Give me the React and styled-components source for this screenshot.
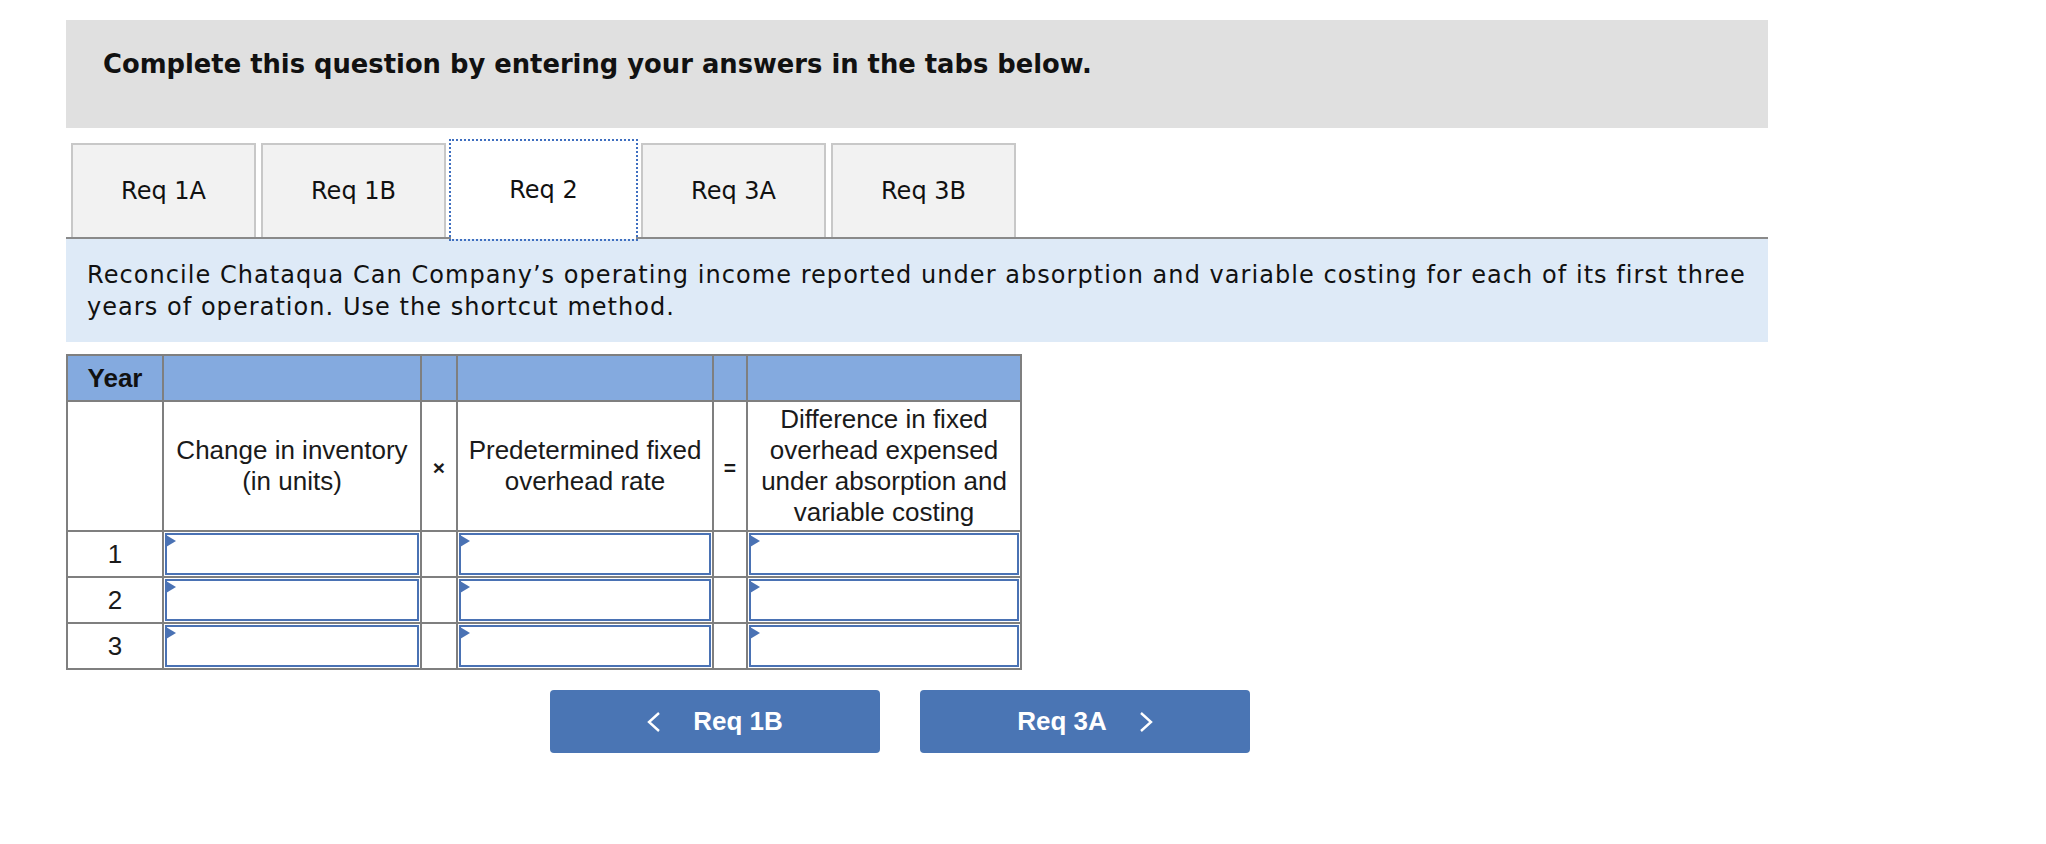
import React from "react";
import styled, { createGlobalStyle } from "styled-components";

const GlobalStyle = createGlobalStyle`
  body {
    margin: 0;
    background: #fff;
    font-family: "DejaVu Sans", Verdana, sans-serif;
    color: #111;
  }
`;

const tabs = ["Req 1A", "Req 1B", "Req 2", "Req 3A", "Req 3B"];
const years = [1, 2, 3];

export default function App() {
  return (
    <>
      <GlobalStyle />
      <Page>
        <Header>
          <HeaderText>Complete this question by entering your answers in the tabs below.</HeaderText>
        </Header>

        <TabBar>
          {tabs.map((t) => (
            <Tab key={t} $active={t === "Req 2"}>
              {t}
            </Tab>
          ))}
        </TabBar>

        <Prompt>
          Reconcile Chataqua Can Company’s operating income reported under absorption and variable costing for
          each of its first three years of operation. Use the shortcut method.
        </Prompt>

        <Table>
          <colgroup>
            <col style={{ width: 96 }} />
            <col style={{ width: 258 }} />
            <col style={{ width: 36 }} />
            <col style={{ width: 256 }} />
            <col style={{ width: 34 }} />
            <col style={{ width: 274 }} />
          </colgroup>
          <thead>
            <HeadRow>
              <HeadCell>Year</HeadCell>
              <HeadCell />
              <HeadCell />
              <HeadCell />
              <HeadCell />
              <HeadCell />
            </HeadRow>
          </thead>
          <tbody>
            <LabelRow>
              <Cell />
              <Cell>
                Change in inventory
                <br />
                (in units)
              </Cell>
              <Cell>
                <Sign>×</Sign>
              </Cell>
              <Cell>
                Predetermined fixed
                <br />
                overhead rate
              </Cell>
              <Cell>
                <Sign>=</Sign>
              </Cell>
              <Cell>
                Difference in fixed
                <br />
                overhead expensed
                <br />
                under absorption and
                <br />
                variable costing
              </Cell>
            </LabelRow>
            {years.map((y) => (
              <EntryRow key={y}>
                <Cell>{y}</Cell>
                <InputCell>
                  <Field>
                    <Input type="text" />
                  </Field>
                </InputCell>
                <Cell />
                <InputCell>
                  <Field>
                    <Input type="text" />
                  </Field>
                </InputCell>
                <Cell />
                <InputCell>
                  <Field>
                    <Input type="text" />
                  </Field>
                </InputCell>
              </EntryRow>
            ))}
          </tbody>
        </Table>

        <NavRow>
          <NavButton>
            <Chevron viewBox="0 0 14 20">
              <polyline points="12,1 2,10 12,19" />
            </Chevron>
            Req 1B
          </NavButton>
          <NavButton>
            Req 3A
            <Chevron viewBox="0 0 14 20">
              <polyline points="2,1 12,10 2,19" />
            </Chevron>
          </NavButton>
        </NavRow>
      </Page>
    </>
  );
}

const Page = styled.div`
  width: 1702px;
  padding: 20px 0 40px 66px;
`;

const Header = styled.div`
  height: 108px;
  box-sizing: border-box;
  background: #e0e0e0;
  padding: 29px 37px 0;
`;

const HeaderText = styled.h1`
  margin: 0;
  font-family: "DejaVu Sans", Verdana, sans-serif;
  font-weight: bold;
  font-size: 25.8px;
  color: #111;
`;

const TabBar = styled.div`
  display: flex;
  align-items: flex-end;
  gap: 5px;
  margin-top: 13px;
  padding-left: 5px;
  position: relative;
  z-index: 1;
`;

const Tab = styled.button`
  width: 185px;
  height: ${(p) => (p.$active ? "98px" : "94px")};
  margin-bottom: ${(p) => (p.$active ? "-2px" : "0")};
  box-sizing: border-box;
  display: flex;
  align-items: center;
  justify-content: center;
  padding: 0;
  background: ${(p) => (p.$active ? "#fff" : "#f2f2f2")};
  border: ${(p) => (p.$active ? "none" : "2px solid #c8c8c8")};
  border-bottom: none;
  outline: ${(p) => (p.$active ? "2px dotted #3f6fc0" : "none")};
  font-family: "DejaVu Sans", Verdana, sans-serif;
  font-size: 24px;
  color: #111;
  cursor: pointer;
`;

const Prompt = styled.p`
  margin: 0;
  background: #deeaf7;
  border-top: 2px solid #8a8a8a;
  padding: 20px 8px 19px 21px;
  font-family: "DejaVu Sans", Verdana, sans-serif;
  font-size: 24px;
  line-height: 32px;
  letter-spacing: 1.05px;
  color: #111;
`;

const Table = styled.table`
  margin-top: 12px;
  width: 955px;
  table-layout: fixed;
  border-collapse: collapse;
  font-family: "Liberation Sans", Arial, sans-serif;
  font-size: 26px;
  color: #1a1a1a;
`;

const HeadRow = styled.tr`
  height: 46px;
`;

const HeadCell = styled.th`
  background: #84aadf;
  border: 2px solid #7f7f7f;
  padding: 0;
  font-weight: bold;
  font-size: 26px;
  text-align: center;
  color: #111;
`;

const LabelRow = styled.tr`
  height: 130px;
`;

const EntryRow = styled.tr`
  height: 46px;
`;

const Cell = styled.td`
  border: 2px solid #7f7f7f;
  padding: 0;
  text-align: center;
  vertical-align: middle;
  background: #fff;
`;

const Sign = styled.span`
  font-size: 21px;
  font-weight: bold;
`;

const InputCell = styled(Cell)`
  padding: 1px;
`;

const Field = styled.div`
  position: relative;

  &::before {
    content: "";
    position: absolute;
    top: 2px;
    left: 1px;
    border-left: 10px solid #4a72b4;
    border-top: 6px solid transparent;
    border-bottom: 6px solid transparent;
  }
`;

const Input = styled.input`
  display: block;
  width: 100%;
  height: 42px;
  box-sizing: border-box;
  margin: 0;
  border: 2px solid #4a72b4;
  background: #fff;
  font-size: 24px;
`;

const NavRow = styled.div`
  display: flex;
  gap: 40px;
  margin-top: 20px;
  padding-left: 484px;
`;

const NavButton = styled.button`
  width: 330px;
  height: 63px;
  display: flex;
  align-items: center;
  justify-content: center;
  gap: 32px;
  background: #4a75b4;
  border: none;
  border-radius: 4px;
  font-family: "Liberation Sans", Arial, sans-serif;
  font-weight: bold;
  font-size: 26px;
  color: #fff;
  cursor: pointer;
`;

const Chevron = styled.svg`
  width: 14px;
  height: 20px;
  fill: none;
  stroke: #fff;
  stroke-width: 2.4;
`;
